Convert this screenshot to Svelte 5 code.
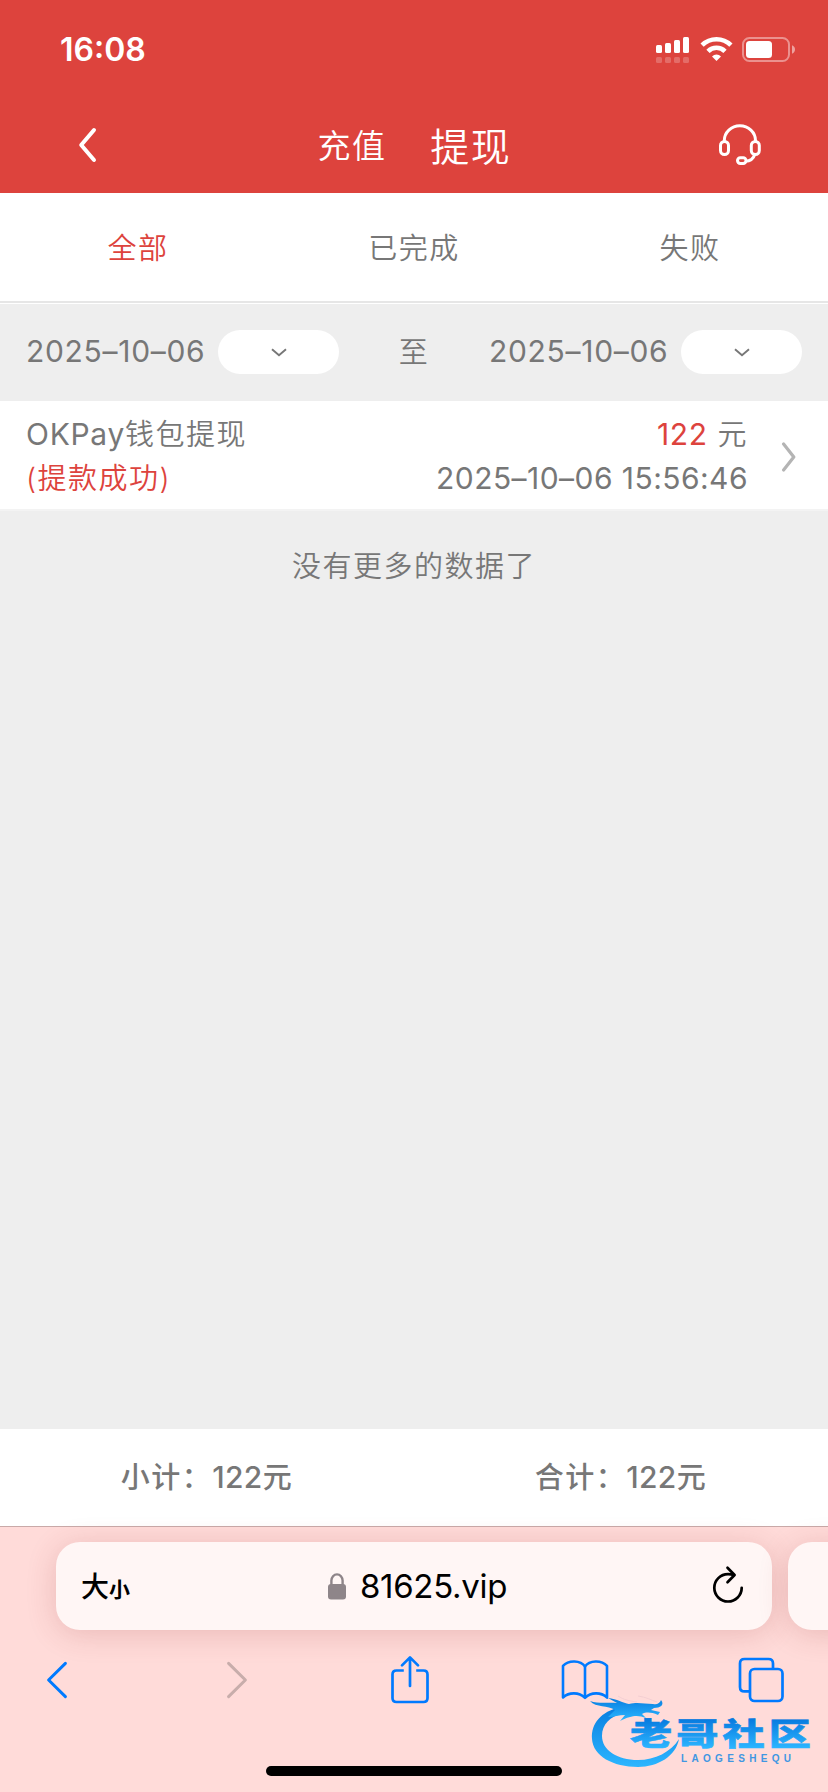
<script lang="ts">
  type Tab = { id: string; label: string };
  type Entry = {
    wallet: string;
    title: string;
    status: string;
    amount: number;
    time: string;
  };

  const tabs: Tab[] = [
    { id: "all", label: "全部" },
    { id: "done", label: "已完成" },
    { id: "failed", label: "失败" },
  ];

  const entries: Entry[] = [
    {
      wallet: "OKPay",
      title: "钱包提现",
      status: "(提款成功)",
      amount: 122,
      time: "2025–10–06 15:56:46",
    },
  ];

  let activeTab = $state("all");
  let from = $state("2025–10–06");
  let to = $state("2025–10–06");
  let total = $derived(entries.reduce((sum, e) => sum + e.amount, 0));
</script>

{#snippet datePill()}
  <button class="pill" aria-label="选择日期">
    <svg width="16" height="9" viewBox="0 0 16 9">
      <path d="M1 1.2 L8 7.2 L15 1.2" fill="none" stroke="#777" stroke-width="1.9" />
    </svg>
  </button>
{/snippet}

<div class="screen">
  <header>
    <div class="status">
      <span class="clock">16:08</span>
      <svg class="signals" width="140" height="28" viewBox="0 0 140 28" fill="#fff">
        <rect x="0" y="9" width="6" height="8" rx="1.5" />
        <rect x="9" y="7" width="6" height="10" rx="1.5" />
        <rect x="18" y="4" width="6" height="13" rx="1.5" />
        <rect x="27" y="1" width="6" height="16" rx="1.5" />
        <g opacity="0.22">
          <rect x="0" y="21" width="6" height="6" rx="1.5" />
          <rect x="9" y="21" width="6" height="6" rx="1.5" />
          <rect x="18" y="21" width="6" height="6" rx="1.5" />
          <rect x="27" y="21" width="6" height="6" rx="1.5" />
        </g>
        <g fill="none" stroke="#fff" stroke-width="4.6">
          <path d="M46.1 9.2 A20.5 20.5 0 0 1 74.9 9.2" />
          <path d="M52 15.3 A12 12 0 0 1 69 15.3" />
        </g>
        <path d="M60.5 25 L56 20.4 A6.4 6.4 0 0 1 65 20.4 Z" />
        <rect x="87" y="2" width="46" height="23" rx="6.5" fill="none" stroke="#fff" stroke-width="2" opacity="0.42" />
        <rect x="90" y="5" width="26" height="17" rx="3.5" />
        <path d="M136 9.3 C140 10.5 140 16.5 136 17.7 Z" opacity="0.5" />
      </svg>
    </div>
    <nav class="titlebar">
      <svg class="back" width="20" height="36" viewBox="0 0 20 36">
        <path d="M16 3 L3.2 18 L16 33" fill="none" stroke="#fff" stroke-width="4" stroke-linecap="round" stroke-linejoin="round" />
      </svg>
      <div class="modes">
        <span class="mode">充值</span>
        <span class="mode current">提现</span>
      </div>
      <svg class="support" width="44" height="42" viewBox="0 0 44 42" fill="none" stroke="#fff" stroke-width="3">
        <path d="M6.3 17.5 V16.5 A15.6 14.8 0 0 1 37.5 16.5 V17.5" />
        <rect x="2.5" y="17.5" width="8" height="13" rx="4" />
        <rect x="33.3" y="17.5" width="8" height="13" rx="4" />
        <path d="M37 30 C35.5 34.5 32 37.2 27.5 37.2" />
        <rect x="19.5" y="33.8" width="8.5" height="5.6" rx="2.8" />
      </svg>
    </nav>
  </header>

  <div class="tabs">
    {#each tabs as tab (tab.id)}
      <button class="tab" class:active={activeTab === tab.id} onclick={() => (activeTab = tab.id)}>
        {tab.label}
      </button>
    {/each}
  </div>

  <div class="range">
    <span class="date latin">{from}</span>
    {@render datePill()}
    <span class="sep">至</span>
    <span class="date latin">{to}</span>
    {@render datePill()}
  </div>

  <main>
    {#each entries as entry}
      <div class="entry">
        <div class="col">
          <span><span class="latin">{entry.wallet}</span>{entry.title}</span>
          <span class="red">{entry.status}</span>
        </div>
        <div class="col right">
          <span><span class="red latin">{entry.amount}</span> 元</span>
          <span class="latin time">{entry.time}</span>
        </div>
        <svg width="16" height="30" viewBox="0 0 16 30">
          <path d="M2.6 2 L12.8 15 L2.6 28" fill="none" stroke="#b4b4b4" stroke-width="3.2" stroke-linecap="round" stroke-linejoin="round" />
        </svg>
      </div>
    {/each}
    <p class="empty">没有更多的数据了</p>
  </main>

  <div class="totals">
    <span class="total">小计：<span class="sum">{total}</span>元</span>
    <span class="total">合计：<span class="sum">{total}</span>元</span>
  </div>

  <footer>
    <div class="address-row">
      <div class="address">
        <span class="aa"><span class="big">大</span><span class="small">小</span></span>
        <span class="site">
          <svg width="18" height="27" viewBox="0 0 18 27">
            <path d="M3.4 12 V7.6 A5.6 6.2 0 0 1 14.6 7.6 V12" fill="none" stroke="#8e8589" stroke-width="2.4" />
            <rect x="0" y="11" width="18" height="15.4" rx="3" fill="#8e8589" />
          </svg>
          <span class="url">81625.vip</span>
        </span>
        <svg class="reload" width="34" height="40" viewBox="0 0 34 40" fill="none" stroke="#000" stroke-width="2.7" stroke-linecap="round" stroke-linejoin="round">
          <path d="M30.7 22.8 A13.7 13.7 0 1 1 17 9.1 Q20.4 9.1 22.6 10" />
          <path d="M16.5 2.8 L23.6 10 L16.5 17.2" />
        </svg>
      </div>
      <div class="address next"></div>
    </div>

    <div class="toolbar">
      <svg width="24" height="40" viewBox="0 0 24 40">
        <path d="M20.4 3.4 L3.6 20 L20.4 36.6" fill="none" stroke="#007aff" stroke-width="3" stroke-linecap="round" stroke-linejoin="round" />
      </svg>
      <svg width="24" height="40" viewBox="0 0 24 40">
        <path d="M3.6 3.4 L20.4 20 L3.6 36.6" fill="none" stroke="#c8adab" stroke-width="3" stroke-linecap="round" stroke-linejoin="round" />
      </svg>
      <svg width="40" height="50" viewBox="0 0 40 50" fill="none" stroke="#007aff" stroke-width="2.7" stroke-linejoin="round">
        <path d="M13.8 15.5 H6.5 Q2.5 15.5 2.5 19.5 V43 Q2.5 47 6.5 47 H33.5 Q37.5 47 37.5 43 V19.5 Q37.5 15.5 33.5 15.5 H26.2" />
        <path d="M20 31 V3 M12 10.4 L20 2.4 L28 10.4" stroke-linecap="round" />
      </svg>
      <svg width="48" height="42" viewBox="0 0 48 42" fill="none" stroke="#007aff" stroke-width="2.6" stroke-linejoin="round">
        <path d="M24 7.5 C19.5 1 7.5 1 2 6.8 V38.5 C8 33 18 33 24 38.8 C30 33 40 33 46 38.5 V6.8 C40.5 1 28.5 1 24 7.5 Z" />
        <path d="M24 7.5 V38.5" />
      </svg>
      <svg width="46" height="46" viewBox="0 0 46 46" fill="none" stroke="#007aff" stroke-width="2.7">
        <path d="M11.5 34.4 H6.5 Q2 34.4 2 29.9 V6.5 Q2 2 6.5 2 H30.5 Q35 2 35 6.5 V11.5" />
        <rect x="12" y="12" width="32.5" height="32" rx="4.5" />
      </svg>
    </div>
    <div class="home"></div>

    <!-- community badge -->
    <svg class="badge" width="228" height="80" viewBox="0 0 228 80">
      <defs>
        <linearGradient id="ring" x1="0" y1="0" x2="0" y2="1">
          <stop offset="0" stop-color="#087ee0" />
          <stop offset="1" stop-color="#2cb6ff" />
        </linearGradient>
        <linearGradient id="word" x1="0" y1="0" x2="0" y2="1">
          <stop offset="0.2" stop-color="#0678de" />
          <stop offset="0.85" stop-color="#2bb4ff" />
        </linearGradient>
      </defs>
      <g fill="url(#ring)">
        <path d="M32 12 C13 17 3 28 4 44 C5 61 25 72 50 72 C70 72 88 61 91 44 C83 57 67 65 50 65 C29 65 14 55 14 41 C14 29 22 22 35 18 L45 15 Z" />
        <path d="M2 6 C11 9 20 7 29 8 L20 3 C29 4 35 8 41 9 C50 7 56 9 65 9 C69 10 72 8 73 5 C77 10 72 13 66 13 L63 15 L72 17 L70 20 C63 17 58 17 54 19 L58 23 C50 20 44 20 32 26 L37 20 C31 20 26 22 20 22 L27 15 C20 10 8 13 2 6 Z" />
      </g>
      <path d="M30 1 C36 5 42 6 49 7 M50 1 C58 2 63 5 69 7" fill="none" stroke="#f0cbd0" stroke-width="0.8" />
      <text class="word" x="42" y="50" transform="translate(42 0) scale(1.36 1) translate(-42 0)" textLength="133" fill="url(#word)" stroke="url(#word)" stroke-width="0.6">老哥社区</text>
      <text class="pinyin" x="93" y="67" textLength="110" fill="#3f97e2">LAOGESHEQU</text>
    </svg>
  </footer>
</div>

<style>
  :global(body) {
    margin: 0;
  }

  .screen {
    position: relative;
    display: flex;
    flex-direction: column;
    width: 828px;
    height: 1792px;
    overflow: hidden;
    background: #eee;
    color: #777;
    font-family: Inter, "Noto Sans CJK SC", sans-serif;
    font-size: 29px;
    font-weight: 350;
    letter-spacing: 1.5px;
    white-space: nowrap;
  }

  button {
    border: 0;
    padding: 0;
    background: none;
    color: inherit;
    font: inherit;
    letter-spacing: inherit;
  }

  .red {
    color: #dd433d;
  }

  .latin {
    font-size: 30px;
    font-weight: 400;
    letter-spacing: 0.7px;
  }

  .latin.time {
    letter-spacing: 0.45px;
  }

  header {
    flex: none;
    height: 193px;
    background: #dd433d;
    color: #fff;
  }

  .status {
    display: flex;
    align-items: center;
    justify-content: space-between;
    height: 99px;
    padding: 0 32px 0 60px;
  }

  .clock {
    font-size: 32px;
    font-weight: 600;
    letter-spacing: 0;
  }

  .signals {
    margin-right: 0.5px;
  }

  .titlebar {
    display: flex;
    align-items: center;
    justify-content: space-between;
    height: 91px;
    padding: 0 66px 0 78px;
  }

  .modes {
    display: flex;
    align-items: center;
    gap: 44px;
    margin-left: 13px;
    padding-bottom: 2px;
  }

  .mode {
    font-size: 33px;
    letter-spacing: 1.3px;
  }

  .mode.current {
    font-size: 39px;
    letter-spacing: 1.6px;
  }

  .tabs {
    flex: none;
    display: flex;
    height: 108px;
    border-bottom: 2px solid #e6e6e6;
    background: #fff;
    box-shadow: 0 1px 0 #fff;
    margin-bottom: 1px;
  }

  .tab {
    flex: 1;
    padding-bottom: 2px;
  }

  .tab.active {
    color: #dd433d;
  }

  .range {
    flex: none;
    display: flex;
    align-items: center;
    box-sizing: border-box;
    height: 97px;
    padding: 0 26px 1px;
  }

  .date {
    width: 192px;
    padding-bottom: 2px;
  }

  .pill {
    display: flex;
    align-items: center;
    justify-content: center;
    width: 121px;
    height: 44px;
    border-radius: 22px;
    background: #fff;
  }

  .sep {
    flex: 1;
    padding-bottom: 4px;
    text-align: center;
  }

  main {
    flex: 1;
  }

  .entry {
    display: flex;
    align-items: center;
    box-sizing: border-box;
    height: 110px;
    padding: 3px 31px 0 26px;
    border-bottom: 2px solid #f3f3f3;
    background: #fff;
  }

  .col {
    display: flex;
    flex-direction: column;
    line-height: 43.5px;
  }

  .col.right {
    margin-left: auto;
    margin-right: 33px;
    text-align: right;
  }

  .empty {
    margin: 34px 0 0;
    line-height: 44px;
    text-align: center;
  }

  .totals {
    flex: none;
    display: flex;
    align-items: center;
    box-sizing: border-box;
    height: 97px;
    padding-bottom: 5px;
    background: #fff;
    font-weight: 500;
  }

  .total {
    flex: 1;
    text-align: center;
  }

  .sum {
    font-size: 30px;
    letter-spacing: 0.3px;
  }

  footer {
    flex: none;
    position: relative;
    box-sizing: border-box;
    height: 266px;
    border-top: 1px solid #c9a9a8;
    background: #ffdbd9;
    color: #000;
    letter-spacing: 0;
  }

  .address-row {
    display: flex;
    gap: 16px;
    padding: 15px 0 0 56px;
  }

  .address {
    flex: none;
    display: flex;
    align-items: center;
    justify-content: space-between;
    box-sizing: border-box;
    width: 716px;
    height: 88px;
    padding: 0 27px 0 25px;
    border-radius: 24px;
    background: #fff6f5;
    box-shadow: 0 4px 30px rgba(150, 50, 50, 0.2);
  }

  .aa {
    display: flex;
    align-items: baseline;
    padding-bottom: 2px;
    font-weight: 500;
  }

  .big {
    font-size: 28px;
  }

  .small {
    font-size: 21px;
    font-weight: 700;
  }

  .site {
    display: flex;
    align-items: center;
    gap: 14px;
    margin-right: 6px;
  }

  .url {
    font-size: 33px;
    font-weight: 400;
    letter-spacing: -0.3px;
  }

  .reload {
    margin-bottom: 3px;
  }

  .toolbar {
    display: grid;
    grid-template-columns: 114px 246px 100px 249px 103px;
    align-items: center;
    justify-items: center;
    height: 100px;
  }

  .home {
    width: 296px;
    height: 10px;
    margin: 36px auto 0;
    border-radius: 5px;
    background: #000;
  }

  .badge {
    position: absolute;
    left: 588px;
    top: 168px;
  }

  .word {
    font-family: "Noto Sans CJK SC", sans-serif;
    font-size: 31px;
    font-weight: 900;
  }

  .pinyin {
    font-family: "Liberation Sans", sans-serif;
    font-size: 10px;
    font-weight: 700;
  }
</style>
